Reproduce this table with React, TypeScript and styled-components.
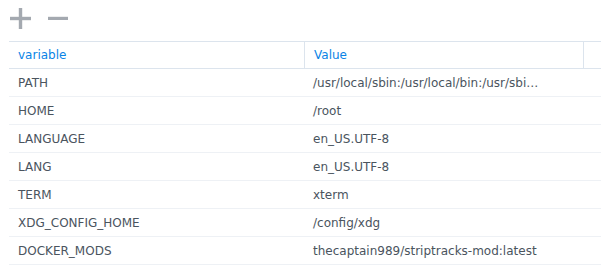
import React from "react";
import styled, { createGlobalStyle } from "styled-components";

const GlobalStyle = createGlobalStyle`
  html, body {
    margin: 0;
    padding: 0;
    background: #ffffff;
    overflow: hidden;
  }
  body {
    font-family: "DejaVu Sans", Verdana, sans-serif;
    font-size: 12px;
    color: #4a545e;
  }
`;

const Page = styled.div`
  width: 601px;
  height: 266px;
  padding-left: 9px;
  box-sizing: border-box;
  overflow: hidden;
`;

const Toolbar = styled.div`
  display: flex;
  align-items: center;
  gap: 17px;
  height: 41px;
  padding-left: 1px;
`;

const ToolButton = styled.button`
  display: flex;
  align-items: center;
  justify-content: flex-start;
  width: 21px;
  height: 22px;
  padding: 0;
  margin-top: -5px;
  border: none;
  background: none;
  color: #a4a9b0;
  cursor: pointer;
`;

const Grid = styled.div`
  width: 620px;
  border-top: 1px solid #dce4ed;
`;

const Row = styled.div<{ $header?: boolean }>`
  display: grid;
  grid-template-columns: 295px 279px 1fr;
  height: ${(p) => (p.$header ? "26px" : "27px")};
  border-bottom: 1px solid ${(p) => (p.$header ? "#dce4ed" : "#eef1f5")};
`;

const HeadCell = styled.div<{ $divider?: boolean }>`
  display: flex;
  align-items: center;
  padding-left: 9px;
  color: #0a84e6;
  border-left: ${(p) => (p.$divider ? "1px solid #dce4ed" : "none")};
`;

const Cell = styled.div`
  display: flex;
  align-items: center;
  padding-left: 9px;
  padding-top: 1px;
  white-space: nowrap;
  overflow: hidden;
`;

const rows: [string, string][] = [
  ["PATH", "/usr/local/sbin:/usr/local/bin:/usr/sbi\u2026"],
  ["HOME", "/root"],
  ["LANGUAGE", "en_US.UTF-8"],
  ["LANG", "en_US.UTF-8"],
  ["TERM", "xterm"],
  ["XDG_CONFIG_HOME", "/config/xdg"],
  ["DOCKER_MODS", "thecaptain989/striptracks-mod:latest"],
];

function PlusIcon() {
  return (
    <svg width="21" height="21" viewBox="0 0 21 21">
      <rect x="8.8" y="0" width="3.4" height="21" fill="currentColor" />
      <rect x="0" y="8.8" width="21" height="3.4" fill="currentColor" />
    </svg>
  );
}

function MinusIcon() {
  return (
    <svg width="21" height="21" viewBox="0 0 21 21">
      <rect x="0" y="8.8" width="20" height="3.2" fill="currentColor" />
    </svg>
  );
}

export default function App() {
  return (
    <Page>
      <GlobalStyle />
      <Toolbar>
        <ToolButton aria-label="add">
          <PlusIcon />
        </ToolButton>
        <ToolButton aria-label="remove">
          <MinusIcon />
        </ToolButton>
      </Toolbar>
      <Grid>
        <Row $header>
          <HeadCell>variable</HeadCell>
          <HeadCell $divider>Value</HeadCell>
          <HeadCell $divider />
        </Row>
        {rows.map(([name, value]) => (
          <Row key={name}>
            <Cell>{name}</Cell>
            <Cell>{value}</Cell>
            <Cell />
          </Row>
        ))}
      </Grid>
    </Page>
  );
}
